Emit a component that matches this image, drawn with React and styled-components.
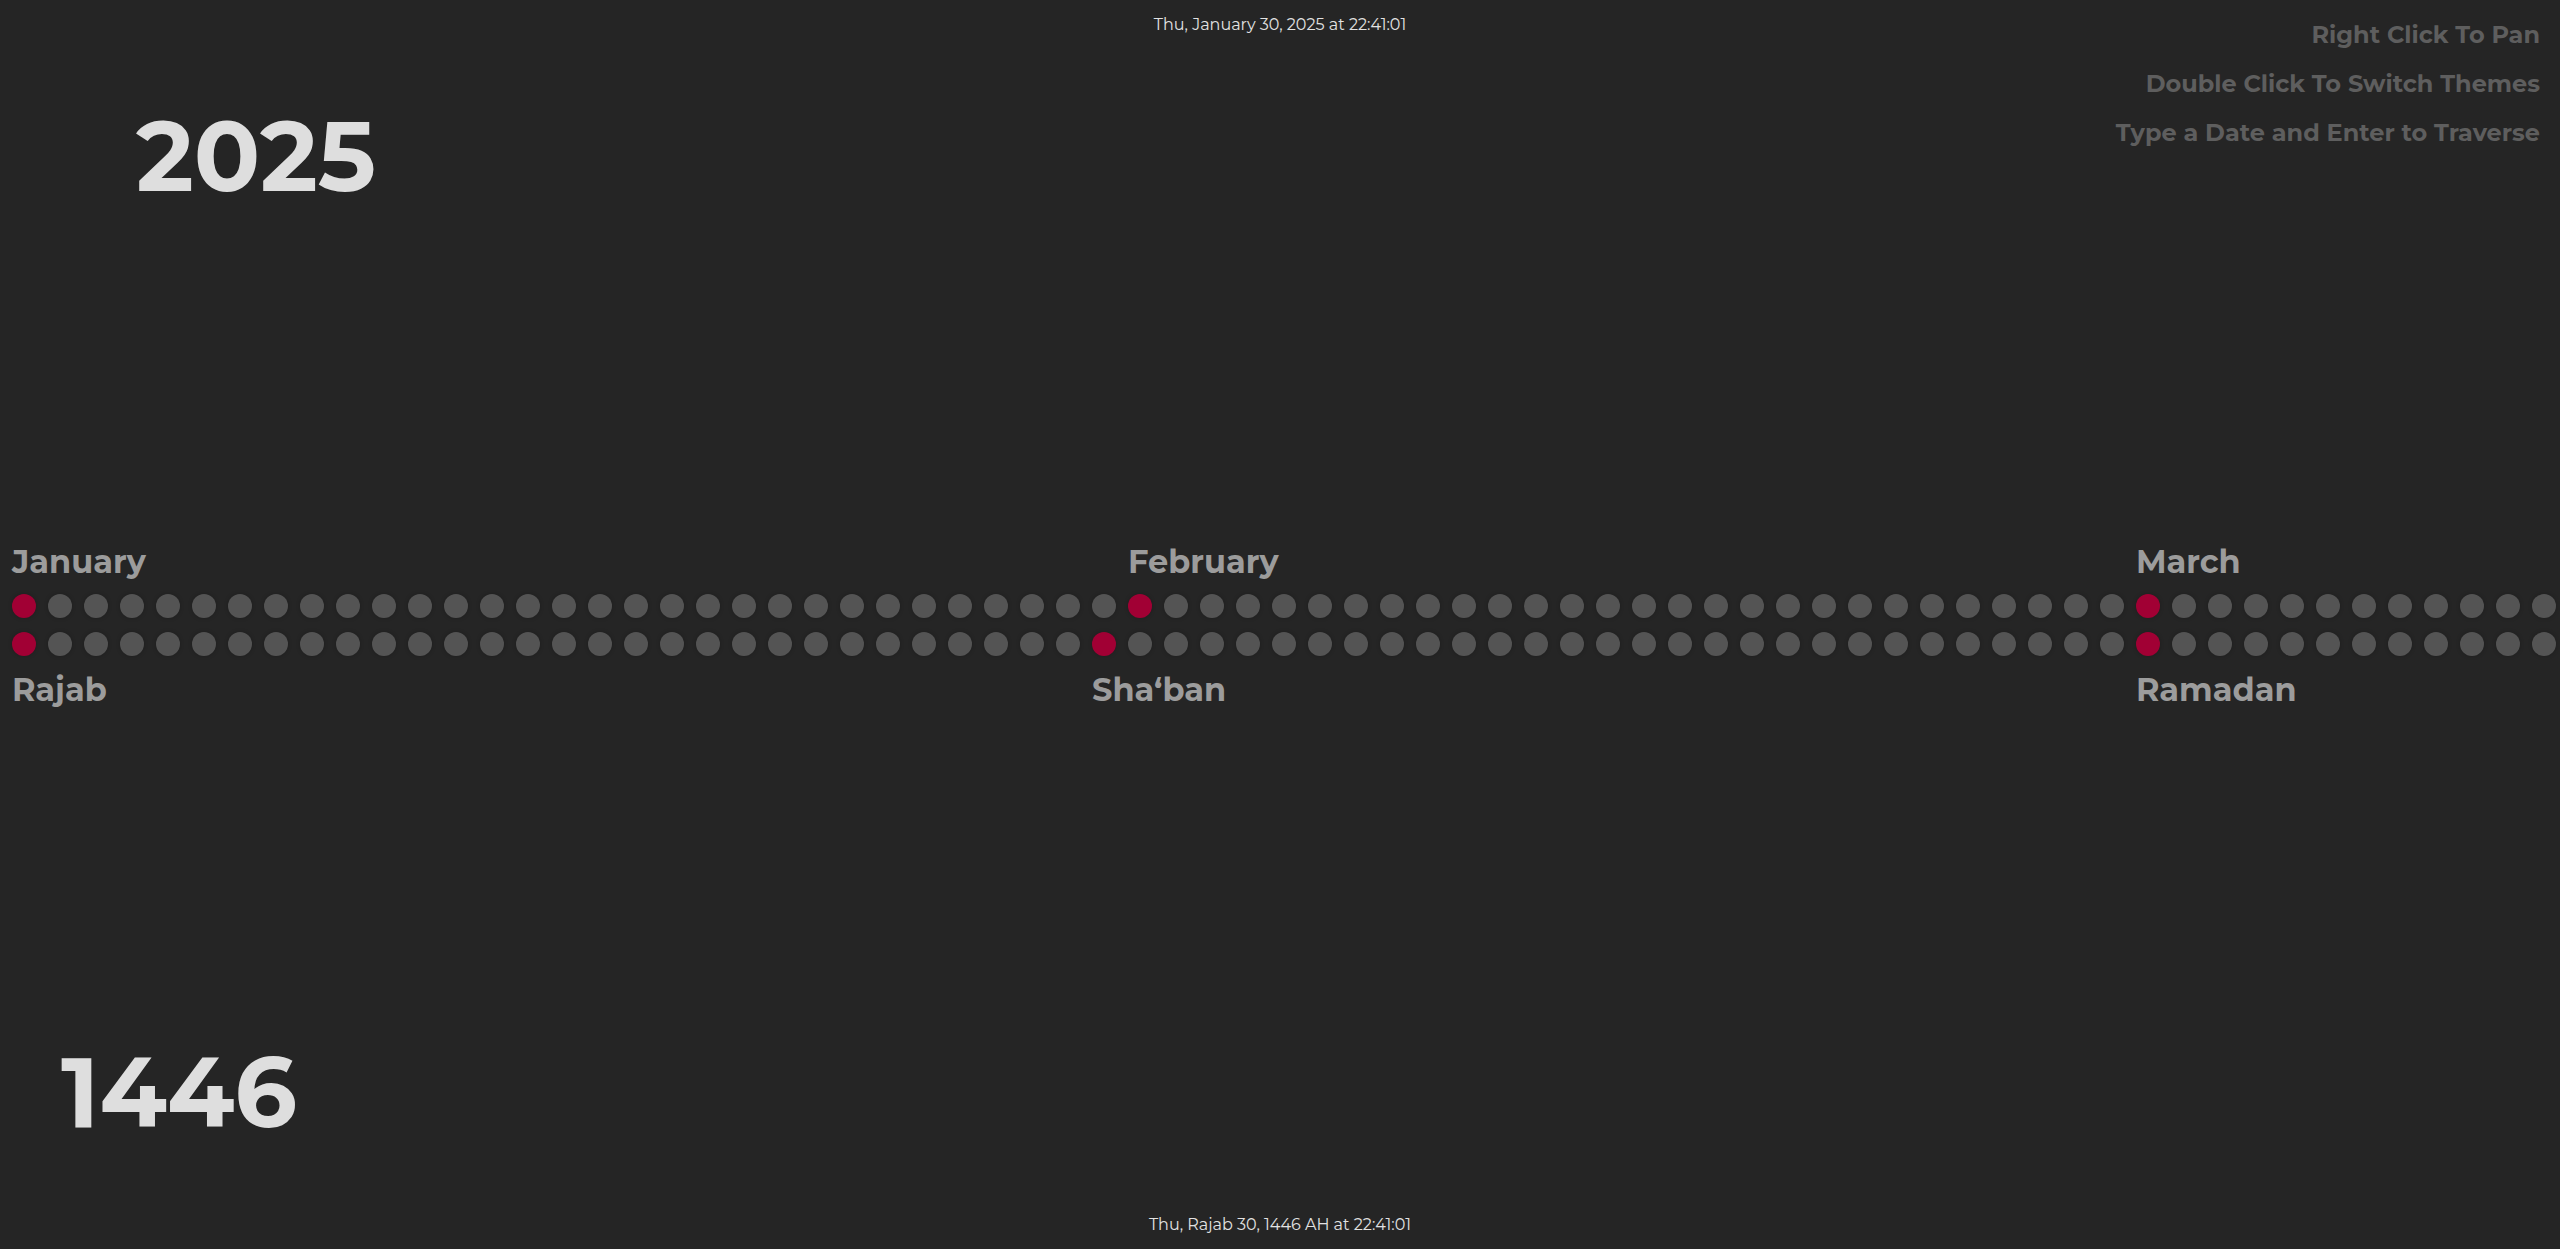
import React from 'react'
import styled, { createGlobalStyle } from 'styled-components'

const gregorian = [
  { name: 'January', days: 31 },
  { name: 'February', days: 28 },
  { name: 'March', days: 31 },
]

const hijri = [
  { name: 'Rajab', days: 30 },
  { name: 'Sha‘ban', days: 29 },
  { name: 'Ramadan', days: 30 },
]

const hints = [
  'Right Click To Pan',
  'Double Click To Switch Themes',
  'Type a Date and Enter to Traverse',
]

export default () => {
  return (
    <Page>
      <GlobalStyle />

      <Header>
        <Year $top={107} $left={136}>2025</Year>
        <DateLine $top={17}>Thu, January 30, 2025 at 22:41:01</DateLine>
        <Hints>
          {hints.map(h => <Hint key={h}>{h}</Hint>)}
        </Hints>
      </Header>

      <Timeline>
        <Track>
          {gregorian.map(m => (
            <Month key={m.name} $gap={12}>
              <MonthLabel>{m.name}</MonthLabel>
              <Dots days={m.days} />
            </Month>
          ))}
        </Track>
        <Track $below>
          {hijri.map(m => (
            <Month key={m.name} $gap={15}>
              <Dots days={m.days} />
              <MonthLabel>{m.name}</MonthLabel>
            </Month>
          ))}
        </Track>
      </Timeline>

      <Footer>
        <Year $top={0} $left={61}>1446</Year>
        <DateLine $top={76}>Thu, Rajab 30, 1446 AH at 22:41:01</DateLine>
      </Footer>
    </Page>
  )
}

const Dots = ({ days }) => (
  <DotRow>
    {Array.from({ length: days }, (_, i) => <Dot key={i} $first={i === 0} />)}
  </DotRow>
)

/***************************** Styled Components *****************************/

const GlobalStyle = createGlobalStyle`
  html, body {
    margin: 0;
    padding: 0;
    background: #252525;
  }
  body {
    font-family: 'Montserrat', 'DejaVu Sans', sans-serif;
  }
`

const Page = styled.div`
  height: 1249px;
  width: 2560px;
  overflow: hidden;
  display: grid;
  grid-template-rows: 1fr auto 1fr;
  grid-template-columns: minmax(0, 1fr);
  background: #252525;
`

const Header = styled.div`
  display: grid;
  grid-template-columns: 1fr auto 1fr;
  align-items: start;
`

const Footer = styled.div`
  display: flex;
  flex-direction: column;
  justify-content: flex-end;
  padding-bottom: 16px;
`

const Year = styled.div`
  padding-top: ${props => props.$top}px;
  padding-left: ${props => props.$left}px;
  font-size: 98px;
  line-height: 1;
  font-weight: 700;
  color: #dedede;
`

const DateLine = styled.div`
  padding-top: ${props => props.$top}px;
  text-align: center;
  font-size: 16px;
  line-height: 1;
  color: #e2e2e2;
`

const Hints = styled.div`
  justify-self: end;
  padding-top: 10px;
  padding-right: 20px;
  text-align: right;
`

const Hint = styled.div`
  font-size: 24px;
  line-height: 49px;
  font-weight: 700;
  color: #5e5e5e;
  white-space: nowrap;
`

const Timeline = styled.div`
  display: flex;
  flex-direction: column;
  gap: 14px;
  margin-top: 3px;
  padding-left: 12px;
`

const Track = styled.div`
  display: flex;
  align-items: ${props => props.$below ? 'flex-start' : 'flex-end'};
`

const Month = styled.div`
  display: flex;
  flex-direction: column;
  flex-shrink: 0;
  gap: ${props => props.$gap}px;
`

const MonthLabel = styled.div`
  font-size: 32px;
  line-height: 1.2;
  font-weight: 700;
  color: #9c9c9c;
  white-space: nowrap;
`

const DotRow = styled.div`
  display: flex;
`

const Dot = styled.div`
  width: 24px;
  height: 24px;
  margin-right: 12px;
  flex-shrink: 0;
  border-radius: 50%;
  background: ${props => props.$first ? '#a10034' : '#545454'};
  box-shadow: 0 0 4px rgba(0, 0, 0, 0.22);
`
